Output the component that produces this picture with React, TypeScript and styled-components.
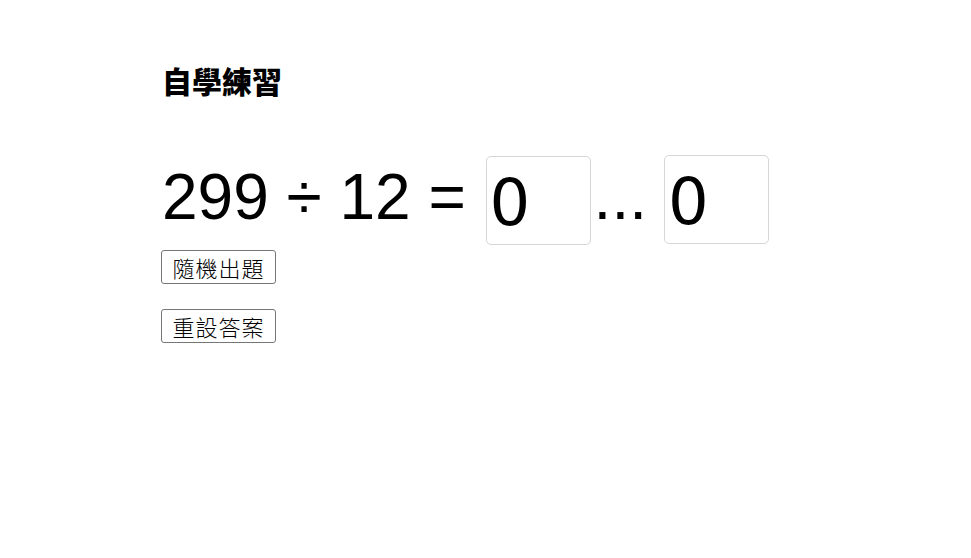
import React, { useState } from "react";
import styled, { createGlobalStyle } from "styled-components";

const Global = createGlobalStyle`
  html, body { margin: 0; padding: 0; background: #ffffff; }
  body { font-family: "Liberation Sans", Arial, sans-serif; color: #000; }
`;

const Page = styled.div`
  width: 971px;
  height: 558px;
  box-sizing: border-box;
  padding: 60px 0 0 162px;
  display: flex;
  flex-direction: column;
`;

const Title = styled.h1`
  margin: 0;
  font-family: "Noto Sans CJK TC", "Noto Sans CJK SC", sans-serif;
  font-weight: 900;
  font-size: 30px;
  line-height: 40px;
  letter-spacing: 0;
`;

const EquationRow = styled.div`
  margin-top: 54px;
  display: flex;
  align-items: center;
  height: 90px;
`;

const Expr = styled.span`
  font-family: "Liberation Sans", Arial, sans-serif;
  font-size: 64px;
  line-height: 1;
  white-space: pre;
  margin-top: -4px;
`;

const AnswerBox = styled.input<{ $shift?: number; $left?: number }>`
  box-sizing: border-box;
  width: 105px;
  height: 89px;
  margin: ${(p) => p.$shift ?? 0}px 0 0 ${(p) => p.$left ?? 0}px;
  padding: 6px 0 0 3px;
  border: 1px solid #d6d6d6;
  border-radius: 5px;
  background: #fff;
  font-family: "DejaVu Sans", sans-serif;
  font-size: 64px;
  color: #000;
  outline: none;
`;

const Dots = styled.span`
  font-family: "Liberation Sans", Arial, sans-serif;
  font-size: 64px;
  line-height: 1;
  margin: -4px 17px 0 3px;
`;

const ActionButton = styled.button<{ $gap: number }>`
  align-self: flex-start;
  margin: ${(p) => p.$gap}px 0 0 -1px;
  box-sizing: border-box;
  width: 115px;
  height: 34px;
  padding: 0;
  border: 1px solid #767676;
  border-radius: 3px;
  background: #ffffff;
  font-family: "Noto Sans CJK TC", "Noto Sans CJK SC", serif;
  font-size: 22px;
  font-weight: 300;
  line-height: 32px;
  letter-spacing: 1px;
  color: #000;
  display: flex;
  align-items: center;
  justify-content: center;
`;

export default function App() {
  const [q, setQ] = useState(0);
  const [r, setR] = useState(0);
  return (
    <>
      <Global />
      <Page>
        <Title>自學練習</Title>
        <EquationRow>
          <Expr>{"299 ÷ 12 = "}</Expr>
          <AnswerBox $shift={2} $left={2} value={q} onChange={(e) => setQ(Number(e.target.value) || 0)} />
          <Dots>...</Dots>
          <AnswerBox value={r} onChange={(e) => setR(Number(e.target.value) || 0)} />
        </EquationRow>
        <ActionButton $gap={6}>隨機出題</ActionButton>
        <ActionButton $gap={25} onClick={() => { setQ(0); setR(0); }}>重設答案</ActionButton>
      </Page>
    </>
  );
}
